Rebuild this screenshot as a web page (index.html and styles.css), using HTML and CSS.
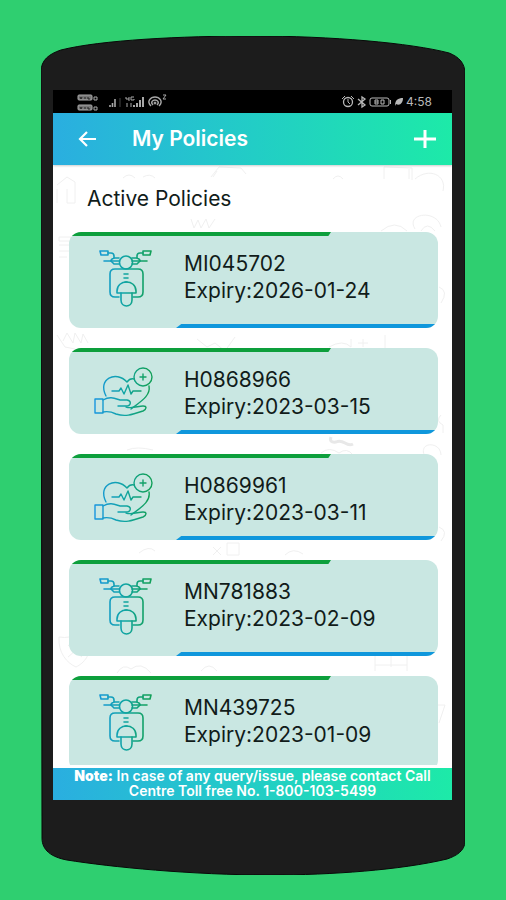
FILE: index.html
```html
<!DOCTYPE html>
<html lang="en">
<head>
    <meta charset="UTF-8">
    <meta name="viewport" content="width=device-width, initial-scale=1.0">
    <title>My Policies</title>
    <link rel="stylesheet" href="styles.css">
</head>
<body>
<!-- shared icons -->
<svg class="defs" width="0" height="0" aria-hidden="true">
    <defs>
        <linearGradient id="blue-green" gradientUnits="userSpaceOnUse" x1="0" y1="0" x2="60" y2="0">
            <stop offset="0" stop-color="#1795e0"/>
            <stop offset="0.5" stop-color="#10a5a5"/>
            <stop offset="0.9" stop-color="#12a05a"/>
        </linearGradient>
        <symbol id="scooter" viewBox="0 0 60 64">
            <g fill="none" stroke="url(#blue-green)" stroke-width="1.6" stroke-linejoin="round" stroke-linecap="round">
                <path d="M6 1h8v4H7z"/>
                <path d="M57 1h-8v4h7z"/>
                <path d="M14 3h3q3 0 3 3v2q-3 1-3 3h8"/>
                <path d="M49 3h-3q-3 0-3 3v2q3 1 3 3h-8"/>
                <path d="M10 11h7M53 11h-7"/>
                <path d="M20 8h5M43 8h-5M17 11l3 3h5M46 11l-3 3h-5"/>
                <circle cx="32" cy="12.500" r="6.500"/>
                <path d="M25 47h-4q-5 0-5-5V24q0-5 5-5h23q5 0 5 5v18q0 5-5 5h-5"/>
                <path d="M30 24h4M30 28h4M31 32h2"/>
                <path d="M23 43v-2c0-12 19-12 19 0v2z"/>
                <path d="M27 43v7c0 8 11 8 11 0v-7"/>
            </g>
        </symbol>
        <symbol id="health" viewBox="0 0 60 54">
            <g fill="none" stroke="url(#blue-green)" stroke-width="1.400" stroke-linejoin="round" stroke-linecap="round">
                <circle cx="49" cy="11" r="9"/>
                <path d="M49 8v6M46 11h6"/>
                <path d="M12 30C3 13 22 4 33 16q3-4 7-3"/>
                <path d="M55 20c2 10-9 16-18 23"/>
                <path d="M18 25h7l2-3 3 6 4-9 3 9 2-3h8"/>
                <path d="M1 33h8v14H1z"/>
                <path d="M9 34c7-4 11-2 17 0h7c5 1 4 6-1 6h-8"/>
                <path d="M32 41c6 2 12-1 17-1 4 0 4 3 0 5-12 4-18 6-27 3-4-2-8-3-13-2"/>
            </g>
        </symbol>
    </defs>
</svg>

<div class="phone">
    <svg class="phone-body" viewBox="0 0 424 840" preserveAspectRatio="none" aria-hidden="true">
        <path d="M0 36C0 24 8 18 20 14C60 4 140 0 212 0C290 0 370 7 408 17C418 21 424 27 424 38V806C424 816 415 821 406 824C360 835 290 840 230 840C150 840 70 832 26 825C10 822 1 815 1 803Z" fill="#1c1c1c" stroke="#080808"/>
    </svg>

    <div class="screen">
        <div class="status-bar">
            <div class="status-group">
                <svg width="94" height="20" viewBox="0 0 94 20" fill="none" stroke="#a8a8a8" aria-hidden="true">
                    <rect x="1" y="3" width="14" height="5" rx="1" fill="#777"/>
                    <rect x="1" y="13" width="14" height="5" rx="1" fill="#777"/>
                    <path d="M3 5l1 2 1-2M7 6h2M11 5v2h2M3 15l1 2 1-2M7 16h2M11 15v2h2" stroke="#222"/>
                    <path d="M17 5h3v3h-3zM17 15h3v3h-3z"/>
                    <path d="M33 15v-2M35.500 15v-4M38 15V7" stroke-width="1.600"/>
                    <path d="M43 15V6" stroke="#444"/>
                    <path d="M49 5v2h3M52 5v4M57 5h-3v3h3V7M50 11v4M54 11v4"/>
                    <path d="M57 15v-2M60 15v-4M63 15V8M66 15V5" stroke-width="2"/>
                    <path d="M74 14c-5-5 0-9 4-9s9 4 4 9M76 13c-3-3 0-5 2-5s5 2 2 5" stroke-width="1.400"/>
                    <circle cx="78" cy="11" r="1" fill="#a8a8a8"/>
                    <path d="M86 3h3l-3 4h3"/>
                </svg>
            </div>
            <div class="status-group">
                <svg width="63" height="16" viewBox="0 0 63 16" fill="none" stroke="#b8b8b8" aria-hidden="true">
                    <circle cx="7" cy="8" r="4.500" stroke-width="1.300"/>
                    <path d="M1 5l3-3M13 5l-3-3M7 5v3l2 2"/>
                    <path d="M17 5l7 6-3 2V3l3 2-7 6" stroke-width="1.300"/>
                    <rect x="29" y="4" width="19" height="8" rx="2"/>
                    <path d="M49.500 6v4M34 6h3v4h-3zM34 8h3M40 6h3v4h-3z"/>
                    <path d="M54 12c0-6 3-8 8-8 0 5-3 8-7 6z" fill="#b8b8b8" stroke="none"/>
                </svg>
                <span class="clock">4:58</span>
            </div>
        </div>

        <header class="app-bar">
            <button class="icon-button" type="button" aria-label="Back">
                <svg width="20" height="18" viewBox="0 0 20 18" fill="none" stroke="#fff" stroke-width="2.200"><path d="M19 9H3M10 2L3 9l7 7"/></svg>
            </button>
            <h1>My Policies</h1>
            <button class="icon-button" type="button" aria-label="Add policy">
                <svg width="22" height="18" viewBox="0 0 22 18" fill="none" stroke="#fff" stroke-width="3"><path d="M0 9h22M11 0v18"/></svg>
            </button>
        </header>

        <main>
            <!-- faint line drawings behind the list -->
            <svg class="doodles" viewBox="0 0 399 603" preserveAspectRatio="xMidYMin slice" fill="none" stroke="#f0f0f0" stroke-width="1" aria-hidden="true">
                <path d="M4 20l10-8 8 5v21h-8V24M4 24v14M158 12l8-10 22 1 5 6M160 12l4-6M70 13q6-6 12 0M90 12q7-4 12 1M280 14q5-6 10 0M331 14V2l28 1v12M356 4v10M390 26c4-16-14-24-28-12"/>
                <path d="M138 54l3 9 4-8 3 8 5-9 3 9 6-9M6 72h12v4H6zM6 80h10M6 86h12M6 92h8M328 66q14-12 26 0M362 64c-10-16 22-20 26-2M368 66q6-10 14 0"/>
                <path d="M4 170l8 12 10 2M10 176l4-8 6 10 2-10 6 10 2-9 5 9M144 174l10 8 8-4 10 8 10-14M276 182q14-8 22 0M298 174v8M310 174v8M305 178h10M332 170v14M386 122q10 4 2 16M388 250q-6 6 2 10v8"/>
                <path d="M278 272q-2 6 5 5c8-4 10 6 17 2" stroke="#e8e8e8" stroke-width="3"/>
                <path d="M74 285q10-4 26 0M268 288q8-7 18 0 8-6 14 2M372 292c-8-16 16-16 16-2M86 388q10-8 16-2M160 382l8 8M168 382l-8 8M174 378h12v12h-12zM232 390q8-8 18-1"/>
                <path d="M6 472q12 2 17-4 6 6 14 4c2 18-6 26-14 30-9-4-18-14-17-30zM15 480l14 12M29 480l-14 12M64 508q6-10 14-4 10-8 20 4M148 506q8-10 16 0M240 480q12 8 26 0M322 506v-16h32v16M338 490v12M322 500h32M382 540h10l-6 18M386 362q10 4 2 14"/>
            </svg>

            <h2>Active Policies</h2>

            <ul class="policy-list">
                <li class="policy">
                    <svg class="policy-icon" width="60" height="64" role="img" aria-label="Two wheeler"><use href="#scooter"/></svg>
                    <div class="policy-text">
                        <p>MI045702</p>
                        <p>Expiry:2026-01-24</p>
                    </div>
                </li>
                <li class="policy">
                    <svg class="policy-icon" width="60" height="54" role="img" aria-label="Health"><use href="#health"/></svg>
                    <div class="policy-text">
                        <p>H0868966</p>
                        <p>Expiry:2023-03-15</p>
                    </div>
                </li>
                <li class="policy">
                    <svg class="policy-icon" width="60" height="54" role="img" aria-label="Health"><use href="#health"/></svg>
                    <div class="policy-text">
                        <p>H0869961</p>
                        <p>Expiry:2023-03-11</p>
                    </div>
                </li>
                <li class="policy">
                    <svg class="policy-icon" width="60" height="64" role="img" aria-label="Two wheeler"><use href="#scooter"/></svg>
                    <div class="policy-text">
                        <p>MN781883</p>
                        <p>Expiry:2023-02-09</p>
                    </div>
                </li>
                <li class="policy">
                    <svg class="policy-icon" width="60" height="64" role="img" aria-label="Two wheeler"><use href="#scooter"/></svg>
                    <div class="policy-text">
                        <p>MN439725</p>
                        <p>Expiry:2023-01-09</p>
                    </div>
                </li>
            </ul>
        </main>

        <footer class="note">
            <strong>Note:</strong> In case of any query/issue, please contact Call Centre Toll free No. 1-800-103-5499
        </footer>
    </div>
</div>
</body>
</html>
```
FILE: styles.css
```css
* {
    box-sizing: border-box;
}

body {
    margin: 0;
    height: 100vh;
    padding: 36px 41px 25px;
    background-color: #2fcf70;
    color: #111c1a;
    font-family: Inter, Roboto, "Liberation Sans", sans-serif;
}

h1,
h2,
p,
ul {
    margin: 0;
    padding: 0;
}

.defs {
    position: absolute;
}

.phone {
    position: relative;
    height: 100%;
    padding: 54px 13px 75px 12px;
}

.phone-body {
    position: absolute;
    top: 0;
    left: 0;
    width: 100%;
    height: 100%;
}

.screen {
    position: relative;
    display: flex;
    flex-direction: column;
    height: 100%;
    overflow: hidden;
    background-color: #ffffff;
}

.status-bar {
    display: flex;
    justify-content: space-between;
    align-items: center;
    height: 23px;
    padding: 0 20px 0 24px;
    background-color: #000000;
}

.status-group {
    display: flex;
    align-items: center;
    gap: 2px;
}

.clock {
    color: #b8b8b8;
    font-size: 12px;
    line-height: 16px;
}

.app-bar {
    display: flex;
    align-items: center;
    height: 52px;
    padding: 0 16px 0 24px;
    background: linear-gradient(to right, #2aaee0, #22cdc6 50%, #1deaa8);
    box-shadow: 0 1px 2px rgba(0, 0, 0, 0.2);
    color: #ffffff;
    z-index: 1;
}

.app-bar h1 {
    flex: 1;
    margin-left: 35px;
    font-size: 21px;
    font-weight: 600;
    line-height: 28px;
}

.icon-button {
    display: flex;
    padding: 0;
    border: none;
    background: none;
    cursor: pointer;
}

main {
    position: relative;
    flex: 1;
    min-height: 0;
    padding: 20px 14px 0 16px;
    overflow-y: auto;
    scrollbar-width: none;
}

.doodles {
    position: absolute;
    top: 0;
    left: 0;
    width: 100%;
    height: 100%;
}

h2 {
    position: relative;
    padding-left: 18px;
    font-size: 21px;
    font-weight: 400;
    line-height: 28px;
}

.policy-list {
    position: relative;
    display: flex;
    flex-direction: column;
    gap: 20px;
    margin-top: 19px;
    list-style: none;
}

.policy {
    position: relative;
    display: flex;
    align-items: flex-start;
    gap: 30px;
    padding: 18px 16px 14px 25px;
    border-radius: 12px;
    background-color: #c9e7e2;
    overflow: hidden;
}

.policy::before,
.policy::after {
    content: "";
    position: absolute;
    width: 71%;
    height: 4px;
}

.policy::before {
    top: 0;
    left: 0;
    background-color: #0d9f3c;
    clip-path: polygon(0 0, 100% 0, 99% 100%, 0 100%);
}

.policy::after {
    right: 0;
    bottom: 0;
    background-color: #0f97dc;
    clip-path: polygon(2% 0, 100% 0, 100% 100%, 0 100%);
}

.policy-text {
    font-size: 21px;
    line-height: 27px;
}

.note {
    padding: 0 14px 2px;
    border-top: 3px solid #ffffff;
    background: linear-gradient(to right, #2aaee0, #22cdc6 50%, #1deaa8) padding-box;
    color: #ffffff;
    font-size: 14px;
    font-weight: 600;
    line-height: 15px;
    text-align: center;
}
```
